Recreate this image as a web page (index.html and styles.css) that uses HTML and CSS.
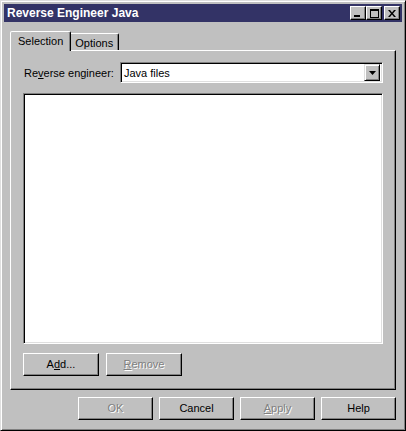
FILE: index.html
```html
<!DOCTYPE html>
<html lang="en">
<head>
    <meta charset="UTF-8">
    <title>Reverse Engineer Java</title>
    <link rel="stylesheet" href="styles.css">
</head>
<body>
    <div class="window">
        <div class="titlebar">
            <span class="title">Reverse Engineer Java</span>
            <div class="caption-btns">
                <span class="caption-btn">
                    <svg width="8" height="7" viewBox="0 0 8 7"><rect x="0" y="5" width="6" height="2" fill="#000"/></svg>
                </span>
                <span class="caption-btn">
                    <svg width="9" height="9" viewBox="0 0 9 9"><path d="M0 0h9v9h-9z M1 2v6h7v-6z" fill="#000" fill-rule="evenodd"/></svg>
                </span>
                <span class="caption-btn caption-btn--close">
                    <svg width="8" height="7" viewBox="0 0 8 7"><path d="M0 0h2l2 2.5l2-2.5h2l-3 3.5l3 3.5h-2l-2-2.5l-2 2.5h-2l3-3.5z" fill="#000"/></svg>
                </span>
            </div>
        </div>

        <div class="dialog">
            <div class="tabs">
                <div class="tab tab--active">Selection</div>
                <div class="tab">Options</div>
            </div>

            <div class="panel">
                <div class="field">
                    <label class="field-label">Re<u>v</u>erse engineer:</label>
                    <div class="combo">
                        <span class="combo-value">Java files</span>
                        <span class="combo-btn">
                            <svg width="7" height="4" viewBox="0 0 7 4"><path d="M0 0h7l-3.5 4z" fill="#000"/></svg>
                        </span>
                    </div>
                </div>
                <div class="listbox"></div>
                <div class="panel-buttons">
                    <button class="btn">A<u>d</u>d...</button>
                    <button class="btn" disabled><u>R</u>emove</button>
                </div>
            </div>

            <div class="dialog-buttons">
                <button class="btn" disabled>OK</button>
                <button class="btn">Cancel</button>
                <button class="btn" disabled><u>A</u>pply</button>
                <button class="btn">Help</button>
            </div>
        </div>
    </div>
</body>
</html>
```

FILE: styles.css
```css
body {
    margin: 0;
    background-color: #c0c0c0;
    font-family: "Liberation Sans", Arial, sans-serif;
    font-size: 11px;
    color: #000;
}

.window {
    box-sizing: border-box;
    width: 406px;
    height: 431px;
    padding: 3px;
    display: flex;
    flex-direction: column;
    background-color: #c0c0c0;
    border: 1px solid;
    border-color: #dfdfdf #000 #000 #dfdfdf;
    box-shadow: inset 1px 1px #fff, inset -1px -1px #808080;
}

.titlebar {
    height: 18px;
    display: flex;
    align-items: center;
    justify-content: space-between;
    padding: 0 2px 0 3px;
    background-color: #333366;
}

.title {
    color: #fff;
    font-weight: bold;
    font-size: 12px;
}

.caption-btns {
    display: flex;
}

.caption-btn {
    box-sizing: border-box;
    width: 16px;
    height: 14px;
    display: flex;
    align-items: center;
    justify-content: center;
    background-color: #c0c0c0;
    border: 1px solid;
    border-color: #fff #000 #000 #fff;
    box-shadow: inset -1px -1px #808080;
}

.caption-btn svg {
    display: block;
}

.caption-btn--close {
    margin-left: 2px;
}

.dialog {
    flex: 1;
    display: flex;
    flex-direction: column;
    padding: 9px 6px 7px 6px;
}

.tabs {
    height: 19px;
    display: flex;
    align-items: flex-end;
}

.tab {
    box-sizing: border-box;
    height: 17px;
    padding: 1px 5px 0 5px;
    display: flex;
    align-items: center;
    border: 1px solid;
    border-bottom: none;
    border-color: #fff #000 transparent #fff;
    border-radius: 2px 2px 0 0;
    box-shadow: inset -1px 0 #808080;
    background-color: #c0c0c0;
}

.tab--active {
    position: relative;
    z-index: 1;
    height: 20px;
    margin-bottom: -1px;
    padding: 0 7px 2px 7px;
    margin-right: -2px;
}

.panel {
    box-sizing: border-box;
    height: 340px;
    display: flex;
    flex-direction: column;
    padding: 11px 12px 13px 12px;
    border: 1px solid;
    border-color: #fff #000 #000 #fff;
    box-shadow: inset -1px -1px #808080;
}

.field {
    display: flex;
    align-items: center;
    height: 21px;
}

.field-label {
    width: 96px;
    padding-left: 1px;
}

.combo {
    box-sizing: border-box;
    flex: 1;
    height: 21px;
    display: flex;
    align-items: center;
    justify-content: space-between;
    background-color: #fff;
    border: 1px solid;
    border-color: #808080 #fff #fff #808080;
    box-shadow: inset 1px 1px #000, inset -1px -1px #dfdfdf;
    padding: 2px;
}

.combo-value {
    padding-left: 1px;
}

.combo-btn {
    box-sizing: border-box;
    width: 16px;
    height: 17px;
    display: flex;
    align-items: center;
    justify-content: center;
    background-color: #c0c0c0;
    border: 1px solid;
    border-color: #dfdfdf #000 #000 #dfdfdf;
    box-shadow: inset 1px 1px #fff, inset -1px -1px #808080;
}

.listbox {
    flex: 1;
    margin-top: 10px;
    background-color: #fff;
    border: 1px solid;
    border-color: #808080 #fff #fff #808080;
    box-shadow: inset 1px 1px #000, inset -1px -1px #dfdfdf;
}

.panel-buttons {
    display: flex;
    gap: 7px;
    margin-top: 9px;
}

.dialog-buttons {
    display: flex;
    justify-content: flex-end;
    gap: 6px;
    margin-top: 7px;
}

.btn {
    box-sizing: border-box;
    width: 75px;
    height: 23px;
    padding: 0 0 1px 0;
    font-family: inherit;
    font-size: 11px;
    color: #000;
    background-color: #c0c0c0;
    border: 1px solid;
    border-color: #fff #000 #000 #fff;
    box-shadow: inset -1px -1px #808080;
    border-radius: 0;
}

.panel-buttons .btn {
    width: 76px;
}

.btn:disabled {
    color: #808080;
    text-shadow: 1px 1px 0 #fff;
}
```
